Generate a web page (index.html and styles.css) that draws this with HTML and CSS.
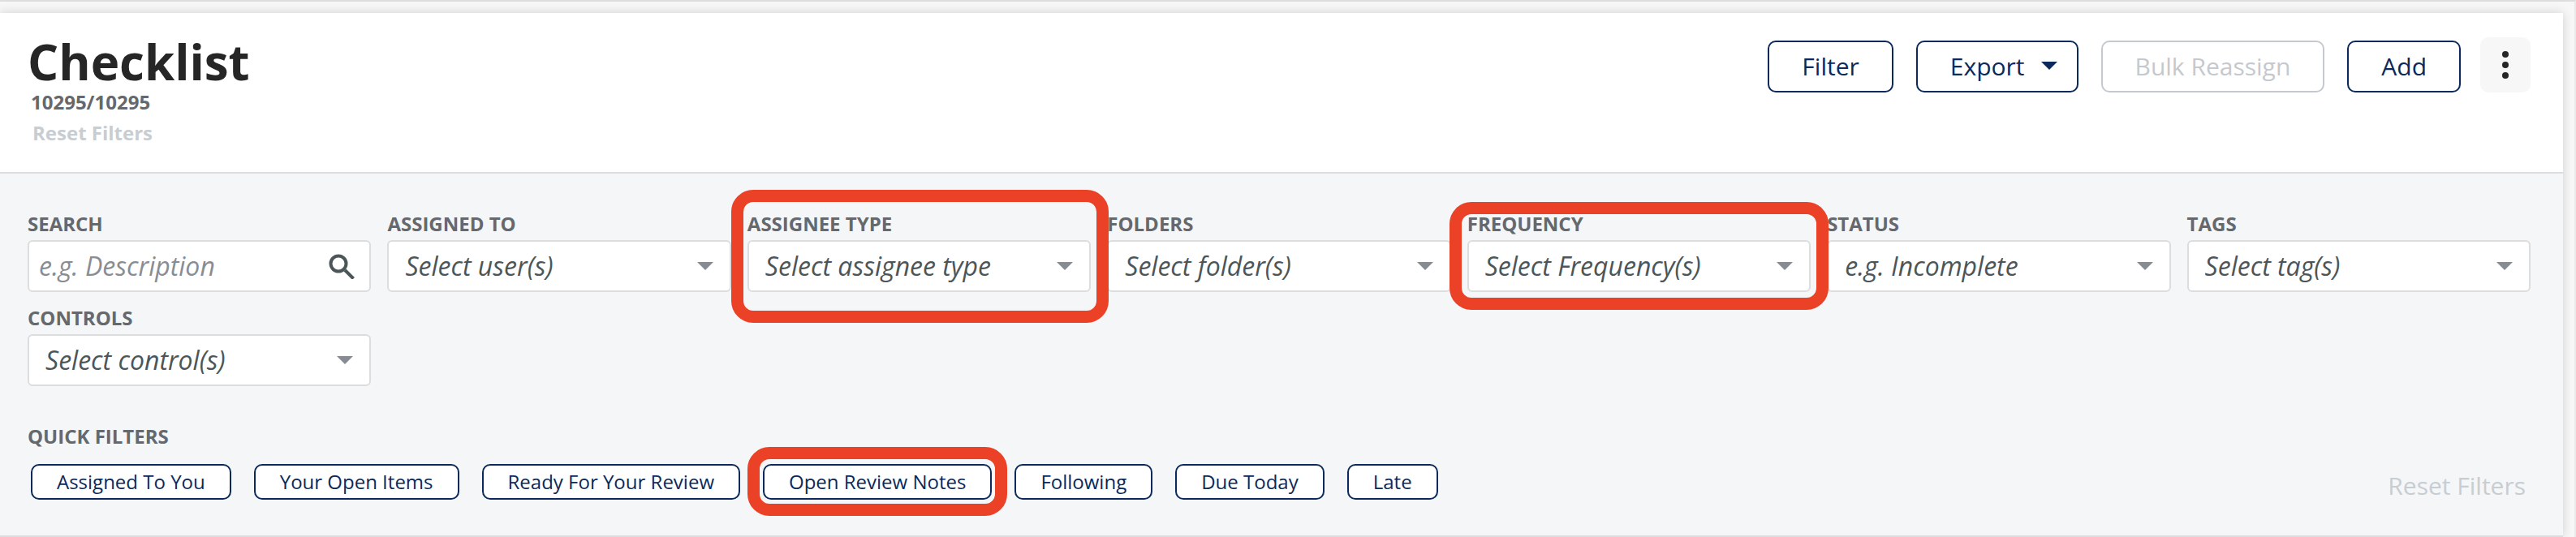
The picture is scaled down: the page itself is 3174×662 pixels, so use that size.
FILE: index.html
```html
<!DOCTYPE html>
<html lang="en">
<head>
<meta charset="utf-8">
<title>Checklist</title>
<link rel="stylesheet" href="styles.css">
</head>
<body>
<main class="panel">
  <header class="header">
    <div class="heading">
      <h1 class="title">Checklist</h1>
      <p class="count">10295/10295</p>
      <button class="reset-small" type="button" disabled>Reset Filters</button>
    </div>
    <div class="actions">
      <button class="btn" type="button">Filter</button>
      <button class="btn btn-menu" type="button">Export
        <svg class="caret" viewBox="0 0 20 10" aria-hidden="true"><path d="M0 0h20L10 10z"/></svg>
      </button>
      <button class="btn" type="button" disabled>Bulk Reassign</button>
      <button class="btn" type="button">Add</button>
      <button class="kebab" type="button" aria-label="More options">
        <svg viewBox="0 0 8 34" aria-hidden="true"><circle cx="4" cy="4" r="4"/><circle cx="4" cy="17" r="4"/><circle cx="4" cy="30" r="4"/></svg>
      </button>
    </div>
  </header>

  <section class="filters">
    <div class="fields">
      <div class="field">
        <label class="label" for="search">SEARCH</label>
        <div class="control">
          <input class="box search" id="search" type="text" placeholder="e.g. Description">
          <svg class="search-icon" viewBox="0 0 32 32" aria-hidden="true"><circle cx="12" cy="13" r="9.5"/><path d="M20 21l10.500 10.500"/></svg>
        </div>
      </div>
      <div class="field">
        <label class="label" for="assigned">ASSIGNED TO</label>
        <div class="control">
          <select class="box" id="assigned"><option>Select user(s)</option></select>
          <svg class="caret" viewBox="0 0 20 10" aria-hidden="true"><path d="M0 0h20L10 10z"/></svg>
        </div>
      </div>
      <div class="field marked marked-tall">
        <label class="label" for="assignee-type">ASSIGNEE TYPE</label>
        <div class="control">
          <select class="box" id="assignee-type"><option>Select assignee type</option></select>
          <svg class="caret" viewBox="0 0 20 10" aria-hidden="true"><path d="M0 0h20L10 10z"/></svg>
        </div>
      </div>
      <div class="field">
        <label class="label" for="folders">FOLDERS</label>
        <div class="control">
          <select class="box" id="folders"><option>Select folder(s)</option></select>
          <svg class="caret" viewBox="0 0 20 10" aria-hidden="true"><path d="M0 0h20L10 10z"/></svg>
        </div>
      </div>
      <div class="field marked marked-short">
        <label class="label" for="frequency">FREQUENCY</label>
        <div class="control">
          <select class="box" id="frequency"><option>Select Frequency(s)</option></select>
          <svg class="caret" viewBox="0 0 20 10" aria-hidden="true"><path d="M0 0h20L10 10z"/></svg>
        </div>
      </div>
      <div class="field">
        <label class="label" for="status">STATUS</label>
        <div class="control">
          <select class="box strong" id="status"><option>e.g. Incomplete</option></select>
          <svg class="caret" viewBox="0 0 20 10" aria-hidden="true"><path d="M0 0h20L10 10z"/></svg>
        </div>
      </div>
      <div class="field">
        <label class="label" for="tags">TAGS</label>
        <div class="control">
          <select class="box" id="tags"><option>Select tag(s)</option></select>
          <svg class="caret" viewBox="0 0 20 10" aria-hidden="true"><path d="M0 0h20L10 10z"/></svg>
        </div>
      </div>
      <div class="field">
        <label class="label" for="controls">CONTROLS</label>
        <div class="control">
          <select class="box" id="controls"><option>Select control(s)</option></select>
          <svg class="caret" viewBox="0 0 20 10" aria-hidden="true"><path d="M0 0h20L10 10z"/></svg>
        </div>
      </div>
    </div>

    <h2 class="label quick-title">QUICK FILTERS</h2>
    <div class="quick-row">
      <div class="chips">
        <button class="chip" type="button">Assigned To You</button>
        <button class="chip" type="button">Your Open Items</button>
        <button class="chip" type="button">Ready For Your Review</button>
        <button class="chip marked marked-chip" type="button">Open Review Notes</button>
        <button class="chip" type="button">Following</button>
        <button class="chip" type="button">Due Today</button>
        <button class="chip" type="button">Late</button>
      </div>
      <button class="reset" type="button" disabled>Reset Filters</button>
    </div>
  </section>
</main>
</body>
</html>
```
FILE: styles.css
```css
* {
  box-sizing: border-box;
}

body {
  margin: 0;
  padding: 14px 14px 0 0;
  border-top: 2px solid #dddddd;
  border-right: 2px solid #e9e9e9;
  background: #f7f7f7;
  font-family: "Open Sans", "Noto Sans", sans-serif;
  overflow: hidden;
}

h1,
h2,
p {
  margin: 0;
}

button,
input,
select {
  font-family: inherit;
}

.panel {
  background: #f4f6f8;
  border-bottom: 2px solid #dcddde;
  box-shadow: 0 0 12px rgba(0, 0, 0, 0.16);
}

.header {
  display: flex;
  justify-content: space-between;
  align-items: flex-start;
  padding: 27px 40px 31px 34px;
  background: #ffffff;
  border-bottom: 2px solid #dcddde;
}

.heading {
  display: flex;
  flex-direction: column;
  align-items: flex-start;
}

.title {
  font-size: 60px;
  line-height: 66px;
  font-weight: 700;
  color: #262626;
}

.count {
  padding-left: 4px;
  font-size: 24px;
  line-height: 34px;
  font-weight: 700;
  color: #65686d;
}

.reset-small {
  margin-top: 4px;
  padding: 0 0 0 6px;
  border: 0;
  background: none;
  font-size: 24px;
  line-height: 34px;
  font-weight: 700;
  color: #c8cdd2;
}

.actions {
  display: flex;
  align-items: flex-end;
  gap: 28px;
  padding-top: 3px;
}

.btn {
  display: flex;
  align-items: center;
  height: 64px;
  padding: 0 40px 2px;
  border: 2px solid #0b2a5b;
  border-radius: 10px;
  background: #ffffff;
  font-size: 30px;
  color: #0b2a5b;
}

.btn:disabled {
  border-color: #c5c9ce;
  color: #c5c9ce;
}

.btn-menu {
  gap: 20px;
  padding-right: 24px;
}

.caret {
  width: 20px;
  height: 10px;
  fill: currentColor;
}

.kebab {
  display: flex;
  align-items: center;
  justify-content: center;
  width: 62px;
  height: 68px;
  margin-left: -4px;
  padding: 0;
  border: 0;
  border-radius: 10px;
  background: #f7f7f7;
}

.kebab svg {
  width: 8px;
  height: 34px;
  fill: #262626;
}

.filters {
  padding: 46px 40px 44px 34px;
}

.fields {
  display: grid;
  grid-template-columns: repeat(7, 1fr);
  gap: 16px 20px;
}

.label {
  display: block;
  font-size: 24px;
  line-height: 32px;
  font-weight: 700;
  color: #65686d;
}

.control {
  display: grid;
  align-items: center;
  margin-top: 4px;
  color: #878c92;
}

.control > * {
  grid-area: 1 / 1;
}

.control .caret {
  justify-self: end;
  margin-right: 22px;
  pointer-events: none;
}

.box {
  appearance: none;
  width: 100%;
  height: 64px;
  padding: 0 50px 2px 20px;
  border: 2px solid #dcddde;
  border-radius: 6px;
  background: #ffffff;
  font-size: 32px;
  font-style: italic;
  color: #4c5659;
}

.search {
  padding-left: 12px;
}

.search::placeholder {
  color: #888d93;
  opacity: 1;
}

.strong {
  font-weight: 500;
}

.search-icon {
  justify-self: end;
  width: 32px;
  height: 32px;
  margin-right: 20px;
  fill: none;
  stroke: #4c5659;
  stroke-width: 4;
}

.marked {
  position: relative;
}

.marked::after {
  content: "";
  position: absolute;
  z-index: 1;
  border: 15px solid #eb4127;
  border-radius: 27px;
  pointer-events: none;
}

.marked-tall::after {
  inset: -26px -22px -38px -20px;
}

.marked-short::after {
  inset: -11px -22px -22px -22px;
}

.quick-title {
  margin-top: 46px;
}

.quick-row {
  display: flex;
  justify-content: space-between;
  align-items: flex-end;
  margin-top: 18px;
  padding: 0 6px 0 4px;
}

.chips {
  display: flex;
  gap: 28px;
}

.chip {
  height: 44px;
  padding: 0 30px;
  border: 2px solid #0b2a5b;
  border-radius: 10px;
  background: #ffffff;
  font-size: 24px;
  line-height: 32px;
  color: #0b2a5b;
}

.marked-chip::after {
  inset: -23px -21px -22px -21px;
}

.reset {
  padding: 0;
  border: 0;
  background: none;
  font-size: 30px;
  line-height: 34px;
  color: #c8cdd2;
}
```
